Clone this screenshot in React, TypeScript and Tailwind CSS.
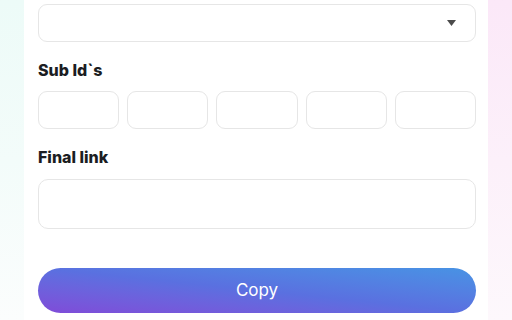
export default function App() {
  const subIds = [0, 1, 2, 3, 4];

  return (
    <div
      className="flex h-[320px] w-[512px] overflow-hidden bg-white"
      style={{ fontFamily: 'Inter, "Noto Sans", sans-serif' }}
    >
      {/* left backdrop */}
      <div className="w-[24px] shrink-0 bg-gradient-to-b from-[#edfbf8] via-[#f3fcfa] to-[#fbfdfd]" />

      {/* form panel */}
      <div className="flex w-[464px] shrink-0 flex-col bg-white pl-[14px] pr-[12px] pt-[4px]">
        <div className="flex h-[38px] items-center justify-end rounded-[9px] border-[1.5px] border-[#e6e6e6] pr-[19px]">
          <svg width="9" height="6" viewBox="0 0 9 6">
            <path d="M0 0h9L4.5 6z" fill="#4b4b4b" />
          </svg>
        </div>

        <div className="mt-[18px] h-[20px] text-[16px] font-extrabold leading-[20px] text-[#1b1d22]">Sub Id`s</div>
        <div className="mt-[11px] grid grid-cols-5 gap-[8px]">
          {subIds.map((i) => (
            <input
              key={i}
              className="h-[38px] w-full rounded-[9px] border-[1.5px] border-[#e6e6e6] bg-white outline-none"
            />
          ))}
        </div>

        <div className="mt-[18px] h-[20px] text-[16px] font-extrabold leading-[20px] text-[#1b1d22]">Final link</div>
        <input className="mt-[12px] h-[50px] w-full rounded-[10px] border-[1.5px] border-[#e6e6e6] bg-white outline-none" />

        <button className="mt-[39px] flex h-[45px] w-full items-center justify-center rounded-full bg-gradient-to-tr from-[#7f4bd8] via-[#5a70e0] to-[#4793e4] text-[17px] text-white">
          Copy
        </button>
      </div>

      {/* right backdrop */}
      <div className="w-[24px] shrink-0 bg-gradient-to-b from-[#fbe8f8] via-[#fcf0fa] to-[#fdf8fc]" />
    </div>
  );
}
